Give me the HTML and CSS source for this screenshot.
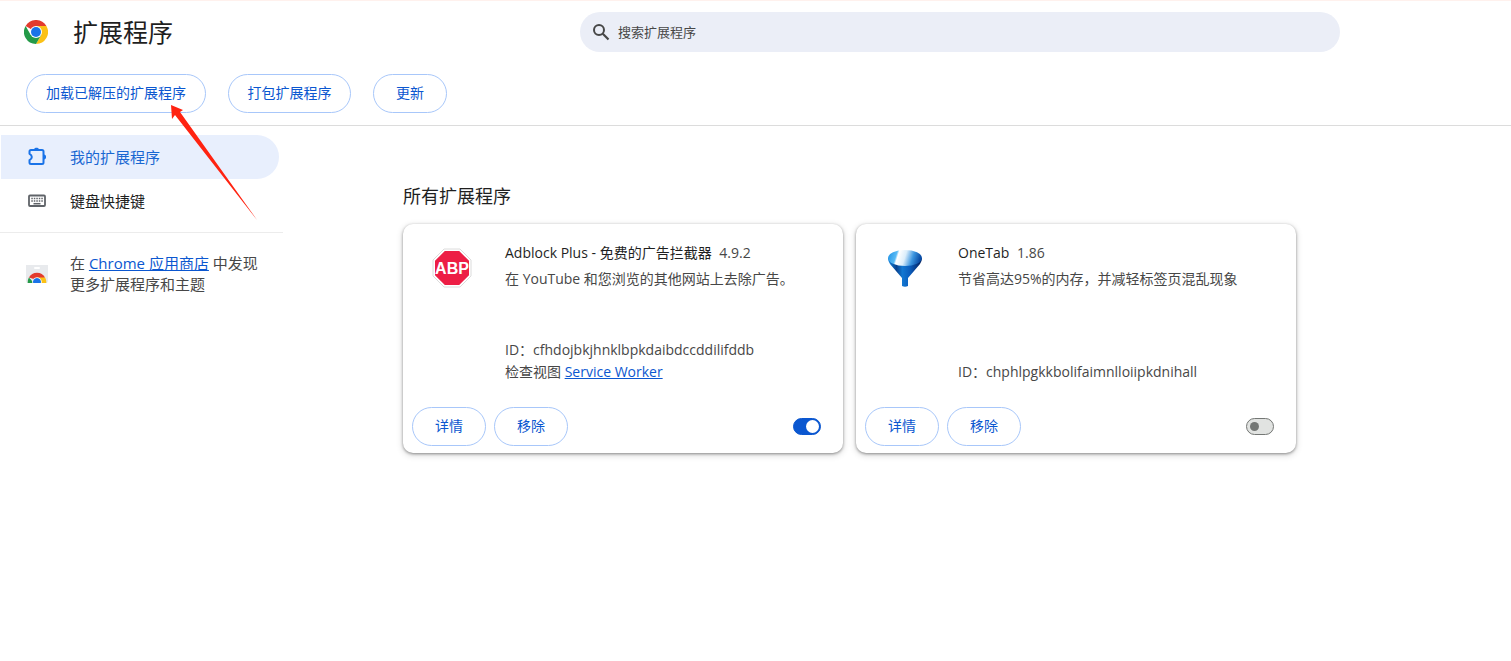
FILE: index.html
```html
<!DOCTYPE html>
<html lang="zh-CN">
<head>
<meta charset="utf-8">
<meta name="viewport" content="width=device-width, initial-scale=1">
<title>扩展程序</title>
<link rel="stylesheet" href="styles.css">
</head>
<body>
<header class="topbar">
  <div class="brand">
    <svg class="brand-logo" viewBox="0 0 24 24" aria-hidden="true">
      <path fill="#e33b2e" d="M12 12 1.6 6A12 12 0 0 1 22.4 6Z"/>
      <path fill="#fbc116" d="M12 12V6h10.4A12 12 0 0 1 12 24L17.2 15Z"/>
      <path fill="#249a48" d="M1.6 6A12 12 0 0 0 12 24l5.2-9L12 12 6.8 15Z"/>
      <circle cx="12" cy="12" r="6" fill="#fff"/>
      <circle cx="12" cy="12" r="5" fill="#1a73e8"/>
    </svg>
    <h1 class="title">扩展程序</h1>
  </div>
  <label class="search">
    <svg class="search-icon" viewBox="0 0 18 18" aria-hidden="true"><circle cx="7" cy="7" r="5" fill="none" stroke="#474747" stroke-width="2"/><path d="m10.8 10.8 5.7 5.7" stroke="#474747" stroke-width="2.2"/></svg>
    <input class="search-input" type="search" placeholder="搜索扩展程序" aria-label="搜索扩展程序">
  </label>
</header>
<div class="toolbar">
  <button class="btn btn-wide" type="button">加载已解压的扩展程序</button>
  <button class="btn btn-wide" type="button">打包扩展程序</button>
  <button class="btn" type="button">更新</button>
</div>
<div class="layout">
  <aside class="sidebar">
    <nav class="menu">
      <a class="menu-item active" href="#extensions">
        <svg class="menu-icon" viewBox="0 0 20 20" aria-hidden="true"><path fill="none" stroke="#1a73e8" stroke-width="2" stroke-linejoin="round" d="M4 3h11q1.500 0 1.500 1.500v11q0 1.500-1.500 1.500H4q-1.500 0-1.500-1.500v-2.300q2.300-1 2.300-3.200T2.500 6.800V4.500Q2.500 3 4 3Z"/><path fill="#1a73e8" d="M7 2.500C7 0 12 0 12 2.500ZM17 7.500c2.800 0 2.800 5 0 5Z"/></svg>
        <span>我的扩展程序</span>
      </a>
      <a class="menu-item" href="#shortcuts">
        <svg class="menu-icon" viewBox="0 0 20 20" aria-hidden="true"><rect x="2" y="4.500" width="16" height="10.500" rx="1" fill="none" stroke="#5f6368" stroke-width="1.800"/><path stroke="#5f6368" stroke-width="1.500" stroke-dasharray="1.500 1" d="M4.300 7.600h11.500M4.300 10.100h11.500"/><path stroke="#5f6368" stroke-width="1.500" d="M6.500 12.700h7"/></svg>
        <span>键盘快捷键</span>
      </a>
    </nav>
    <div class="store">
      <svg class="store-icon" viewBox="0 0 22 20" aria-hidden="true">
        <path fill="#e8eaed" d="M0 1h22v16l-1 2H1l-1-2Z"/><rect x="8" y="3" width="6" height="2" rx="1" fill="#fff"/>
        <path fill="#e33b2e" d="M2.900 13.500a9.300 9.300 0 0 1 16.200 0L11 16Z"/>
        <path fill="#249a48" d="M2.900 13.500A9 9 0 0 0 1.700 19H8Z"/>
        <path fill="#fbc116" d="M11 13.500h8.100A9 9 0 0 1 20.300 19H13Z"/>
        <path fill="#fff" d="M6.300 19a4.800 4.800 0 1 1 9.400 0Z"/><path fill="#1a73e8" d="M7.100 19a4 4 0 1 1 7.800 0Z"/>
      </svg>
      <p class="store-text">在 <a class="link" href="#store">Chrome 应用商店</a> 中发现更多扩展程序和主题</p>
    </div>
  </aside>
  <main class="content">
    <h2 class="section-title">所有扩展程序</h2>
    <div class="cards">
      <article class="card">
        <div class="card-main">
          <svg class="card-icon" viewBox="0 0 40 40" aria-hidden="true"><path fill="#fff" stroke="#dcdcdc" d="M12 1h16l11 11v16L28 39H12L1 28V12Z"/><path fill="#ed1e45" d="M12.800 3h14.400L37 12.800v14.400L27.200 37H12.800L3 27.200V12.800Z"/><text class="abp" x="20" y="26" text-anchor="middle">ABP</text></svg>
          <div class="card-body">
            <h3 class="name">Adblock Plus - 免费的广告拦截器 <span class="version">4.9.2</span></h3>
            <p class="desc">在 YouTube 和您浏览的其他网站上去除广告。</p>
            <div class="meta"><p>ID：<span>cfhdojbkjhnklbpkdaibdccddilifddb</span></p><p>检查视图 <a class="link" href="#worker">Service Worker</a></p></div>
          </div>
        </div>
        <div class="actions">
          <button class="btn" type="button">详情</button>
          <button class="btn" type="button">移除</button>
          <input class="switch" type="checkbox" role="switch" aria-label="启用 Adblock Plus" checked>
        </div>
      </article>
      <article class="card">
        <div class="card-main">
          <svg class="card-icon" viewBox="0 0 40 40" aria-hidden="true">
            <defs>
              <linearGradient id="cone"><stop offset="0" stop-color="#1687e0"/><stop offset=".25" stop-color="#06418f"/><stop offset=".42" stop-color="#1378d2"/><stop offset=".65" stop-color="#0a5cbc"/><stop offset="1" stop-color="#041d58"/></linearGradient>
              <linearGradient id="rim" x1="0" y1="0" x2="1" y2=".15"><stop offset="0" stop-color="#1c8fe3"/><stop offset=".28" stop-color="#58baf5"/><stop offset=".34" stop-color="#fff"/><stop offset=".55" stop-color="#dceefb"/><stop offset=".78" stop-color="#3b95e0"/><stop offset="1" stop-color="#0a4da6"/></linearGradient>
            </defs>
            <path fill="url(#cone)" d="M3 10q0 3 2 6l12 14v8q3 1.500 6 0v-8l12-14q2-3 2-6Z"/>
            <ellipse fill="url(#rim)" cx="20" cy="10" rx="17" ry="8"/>
          </svg>
          <div class="card-body">
            <h3 class="name">OneTab <span class="version">1.86</span></h3>
            <p class="desc">节省高达95%的内存，并减轻标签页混乱现象</p>
            <div class="meta"><p>ID：<span>chphlpgkkbolifaimnlloiipkdnihall</span></p></div>
          </div>
        </div>
        <div class="actions">
          <button class="btn" type="button">详情</button>
          <button class="btn" type="button">移除</button>
          <input class="switch" type="checkbox" role="switch" aria-label="启用 OneTab">
        </div>
      </article>
    </div>
  </main>
</div>
<svg class="pointer" viewBox="0 0 86 116" aria-hidden="true"><path fill="#ff2311" d="M0 0 12 5 9 7 86 115 4 10 1 14Z"/></svg>
</body>
</html>
```
FILE: styles.css
```css
* { box-sizing: border-box; }
body {
  margin: 0;
  position: relative;
  border-top: 1px solid #fff1ed;
  background: #fff;
  color: #1f1f1f;
  font: 14px/20px "Open Sans", "Noto Sans CJK SC", sans-serif;
}
h1, h2, h3, p { margin: 0; font-weight: 400; }
.topbar {
  display: grid;
  grid-template-columns: 556px minmax(200px, 760px);
  align-items: center;
  padding: 11px 24px 0;
}
.brand { display: flex; align-items: center; gap: 25px; }
.brand-logo { width: 24px; height: 24px; }
.title { font-size: 25px; line-height: 40px; }
.search {
  display: flex;
  align-items: center;
  gap: 6px;
  height: 40px;
  padding: 0 12px;
  border-radius: 20px;
  background: #ebeef7;
}
.search-icon { width: 18px; height: 18px; }
.search-input {
  flex: 1;
  min-width: 0;
  border: 0;
  outline: 0;
  background: none;
  font: inherit;
  font-size: 13px;
  color: #474747;
}
.search-input::placeholder { color: #474747; opacity: 1; }
.toolbar {
  display: flex;
  gap: 22px;
  padding: 22px 26px 12px;
  border-bottom: 1px solid #dcdcdc;
}
.btn {
  height: 39px;
  min-width: 74px;
  padding: 0 19px 1px;
  border: 1px solid #a8c7fa;
  border-radius: 20px;
  background: #fff;
  color: #0b57d0;
  font: inherit;
  cursor: pointer;
}
.btn-wide { padding: 0 18px 1px; min-width: 123px; flex: none; }
.btn-wide:first-child { padding: 0 19px 1px; }
.layout { display: flex; }
.sidebar { flex: none; width: 283px; padding-top: 9px; }
.menu { padding: 0 4px 9px 1px; border-bottom: 1px solid #ececec; }
.menu-item {
  display: flex;
  align-items: center;
  gap: 23px;
  height: 44px;
  padding-left: 26px;
  border-radius: 0 22px 22px 0;
  color: #1f1f1f;
  font-size: 15px;
  text-decoration: none;
}
.menu-item.active { background: #e8effd; color: #1967d2; }
.menu-icon { width: 20px; height: 20px; }
.store { display: flex; align-items: center; gap: 22px; padding: 20px 12px 0 26px; }
.store-icon { flex: none; width: 22px; height: 20px; }
.store-text { color: #474747; font-size: 15px; line-height: 21px; }
.link { color: #0b57d0; text-decoration: underline; }
.content { flex: 1; min-width: 0; padding: 57px 24px 24px 120px; }
.section-title { font-size: 18px; line-height: 26px; }
.cards {
  display: grid;
  grid-template-columns: repeat(auto-fill, 440px);
  gap: 13px;
  padding-top: 15px;
}
.card {
  display: flex;
  flex-direction: column;
  min-height: 229px;
  border-radius: 10px;
  box-shadow: 0 1px 3px rgba(0, 0, 0, .4), 0 2px 6px 1px rgba(0, 0, 0, .12);
}
.card-main { flex: 1; display: flex; gap: 33px; padding: 18px 20px 0 29px; }
.card-icon { flex: none; width: 40px; height: 40px; margin-top: 6px; }
.abp { font: bold 16px "Liberation Sans", sans-serif; fill: #fff; }
.card-body { flex: 1; display: flex; flex-direction: column; font-size: 14px; color: #474747; }
.name { font-size: 14px; line-height: 22px; color: #1f1f1f; }
.version { margin-left: 4px; color: #474747; }
.desc { padding-top: 4px; line-height: 22px; }
.meta { margin-top: auto; line-height: 22px; }
.actions { display: flex; align-items: center; gap: 8px; padding: 24px 22px 7px 9px; }
.switch {
  appearance: none;
  display: flex;
  align-items: center;
  width: 28px;
  height: 17px;
  margin: 0 0 0 auto;
  padding: 0 3px;
  border: 1px solid #747775;
  border-radius: 9px;
  background: #e1e3e1;
}
.switch::before { content: ""; width: 9px; height: 9px; border-radius: 50%; background: #747775; }
.switch:checked { justify-content: flex-end; padding: 0 1px; border-color: #0b57d0; background: #0b57d0; }
.switch:checked::before { width: 13px; height: 13px; background: #fff; }
.pointer { position: absolute; left: 171px; top: 104px; width: 86px; height: 116px; pointer-events: none; }
```
